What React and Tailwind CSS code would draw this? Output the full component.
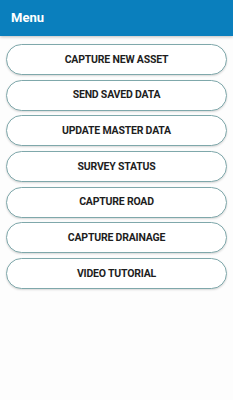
export default function App() {
  const items = [
    "CAPTURE NEW ASSET",
    "SEND SAVED DATA",
    "UPDATE MASTER DATA",
    "SURVEY STATUS",
    "CAPTURE ROAD",
    "CAPTURE DRAINAGE",
    "VIDEO TUTORIAL",
  ];
  return (
    <div className="w-[233px] h-[400px] bg-[#fdfdfd] flex flex-col" style={{ fontFamily: "Roboto, 'Liberation Sans', sans-serif" }}>
      <div className="h-[36px] bg-[#0a7fbd] flex items-center pl-[11px] shadow-[0_1px_3px_rgba(0,0,0,0.25)]">
        <span className="text-white font-bold text-[13px]">Menu</span>
      </div>
      <div className="flex flex-col gap-[4.7px] px-[6px] pt-[8px]">
        {items.map((t) => (
          <div
            key={t}
            className="h-[31px] rounded-full border border-[#7fa8ab] bg-white flex items-center justify-center shadow-[0_1px_2px_rgba(0,0,0,0.15)]"
          >
            <span className="text-[10.5px] font-bold text-[#1e1e1e] tracking-[-0.2px]">{t}</span>
          </div>
        ))}
      </div>
    </div>
  );
}
